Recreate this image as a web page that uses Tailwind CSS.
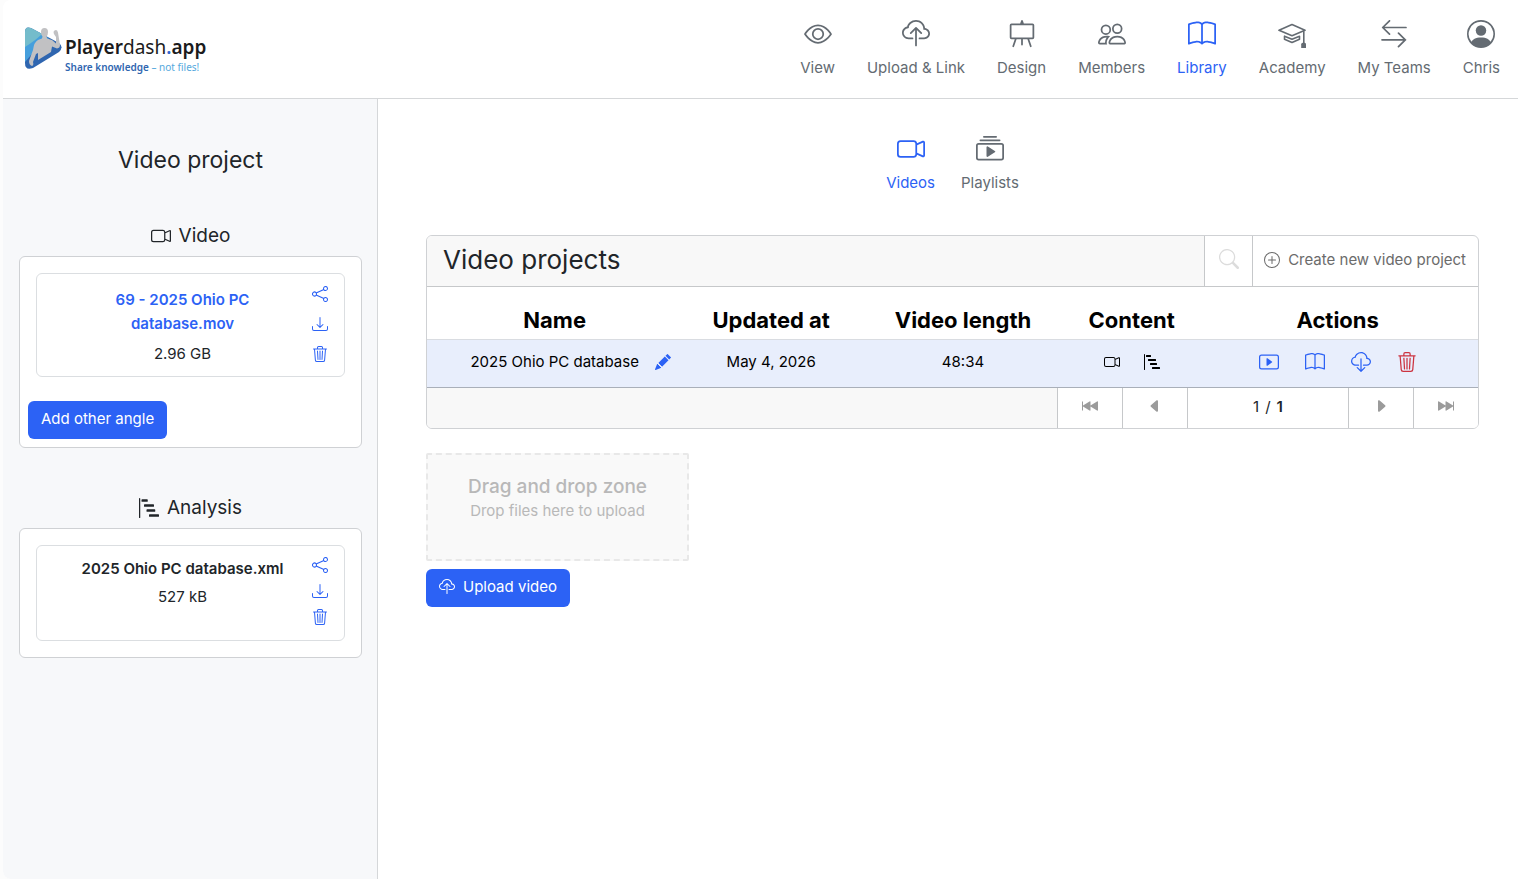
<!DOCTYPE html>
<html lang="en">
<head>
  <meta charset="UTF-8" />
  <meta name="viewport" content="width=device-width, initial-scale=1.0"/>
  <title>Playerdash.app | Library</title>
  <script src="https://cdn.jsdelivr.net/npm/@tailwindcss/browser@4"></script>
</head>
<body class="bg-[#fcfcfc] text-[#212529] font-['Inter',sans-serif] text-[15px] leading-6 pl-[3px]">

<!-- ICONS -->
<svg class="hidden" aria-hidden="true">
  <symbol id="eye" viewBox="0 0 16 16">
    <path d="M16 8s-3-5.5-8-5.5S0 8 0 8s3 5.5 8 5.5S16 8 16 8M1.173 8a13 13 0 0 1 1.66-2.043C4.12 4.668 5.88 3.5 8 3.5s3.879 1.168 5.168 2.457A13 13 0 0 1 14.828 8q-.086.13-.195.288c-.335.48-.83 1.12-1.465 1.755C11.879 11.332 10.119 12.5 8 12.5s-3.879-1.168-5.168-2.457A13 13 0 0 1 1.172 8z"/>
    <path d="M8 5.5a2.5 2.5 0 1 0 0 5 2.5 2.5 0 0 0 0-5M4.5 8a3.5 3.5 0 1 1 7 0 3.5 3.5 0 0 1-7 0"/>
  </symbol>
  <symbol id="cloud-upload" viewBox="0 0 16 16">
    <path d="M4.406 1.342A5.53 5.53 0 0 1 8 0c2.69 0 4.923 2 5.166 4.579C14.758 4.804 16 6.137 16 7.773 16 9.569 14.502 11 12.687 11H10a.5.5 0 0 1 0-1h2.688C13.979 10 15 8.988 15 7.773c0-1.216-1.02-2.228-2.313-2.228h-.5v-.5C12.188 2.825 10.328 1 8 1a4.53 4.53 0 0 0-2.941 1.1c-.757.652-1.153 1.438-1.153 2.055v.448l-.445.049C2.064 4.805 1 5.952 1 7.318 1 8.785 2.23 10 3.781 10H6a.5.5 0 0 1 0 1H3.781C1.708 11 0 9.366 0 7.318c0-1.763 1.266-3.223 2.942-3.593.143-.863.698-1.723 1.464-2.383"/>
    <path d="M7.646 4.146a.5.5 0 0 1 .708 0l3 3a.5.5 0 0 1-.708.708L8.5 5.707V14.5a.5.5 0 0 1-1 0V5.707L5.354 7.854a.5.5 0 1 1-.708-.708z"/>
  </symbol>
  <symbol id="cloud-download" viewBox="0 0 16 16">
    <path d="M4.406 1.342A5.53 5.53 0 0 1 8 0c2.69 0 4.923 2 5.166 4.579C14.758 4.804 16 6.137 16 7.773 16 9.569 14.502 11 12.687 11H10a.5.5 0 0 1 0-1h2.688C13.979 10 15 8.988 15 7.773c0-1.216-1.02-2.228-2.313-2.228h-.5v-.5C12.188 2.825 10.328 1 8 1a4.53 4.53 0 0 0-2.941 1.1c-.757.652-1.153 1.438-1.153 2.055v.448l-.445.049C2.064 4.805 1 5.952 1 7.318 1 8.785 2.23 10 3.781 10H6a.5.5 0 0 1 0 1H3.781C1.708 11 0 9.366 0 7.318c0-1.763 1.266-3.223 2.942-3.593.143-.863.698-1.723 1.464-2.383"/>
    <path d="M7.646 15.854a.5.5 0 0 0 .708 0l3-3a.5.5 0 0 0-.708-.708L8.5 14.293V5.5a.5.5 0 0 0-1 0v8.793l-2.146-2.147a.5.5 0 0 0-.708.708z"/>
  </symbol>
  <symbol id="easel" viewBox="0 0 16 16">
    <path d="M8 0a.5.5 0 0 1 .473.337L9.046 2H14a1 1 0 0 1 1 1v7a1 1 0 0 1-1 1h-1.85l1.323 3.837a.5.5 0 1 1-.946.326L11.092 11H8.5v3a.5.5 0 0 1-1 0v-3H4.908l-1.435 4.163a.5.5 0 1 1-.946-.326L3.85 11H2a1 1 0 0 1-1-1V3a1 1 0 0 1 1-1h4.954L7.527.337A.5.5 0 0 1 8 0M2 3v7h12V3z"/>
  </symbol>
  <symbol id="people" viewBox="0 0 16 16">
    <path d="M15 14s1 0 1-1-1-4-5-4-5 3-5 4 1 1 1 1zm-7.978-1L7 12.996c.001-.264.167-1.03.76-1.72C8.312 10.629 9.282 10 11 10c1.717 0 2.687.63 3.24 1.276.593.69.758 1.457.76 1.72l-.008.002-.014.002zM11 7a2 2 0 1 0 0-4 2 2 0 0 0 0 4m3-2a3 3 0 1 1-6 0 3 3 0 0 1 6 0M6.936 9.28a6 6 0 0 0-1.23-.247A7 7 0 0 0 5 9c-4 0-5 3-5 4q0 1 1 1h4.216A2.24 2.24 0 0 1 5 13c0-1.01.377-2.042 1.09-2.904.243-.294.526-.569.846-.816M4.92 10A5.5 5.5 0 0 0 4 13H1c0-.26.164-1.03.76-1.724.545-.636 1.492-1.256 3.16-1.275ZM1.5 5.5a3 3 0 1 1 6 0 3 3 0 0 1-6 0m3-2a2 2 0 1 0 0 4 2 2 0 0 0 0-4"/>
  </symbol>
  <symbol id="book" viewBox="0 0 16 16">
    <path d="M1 2.828c.885-.37 2.154-.769 3.388-.893 1.33-.134 2.458.063 3.112.752v9.746c-.935-.53-2.12-.603-3.213-.493-1.18.12-2.37.461-3.287.811zm7.5-.141c.654-.689 1.782-.886 3.112-.752 1.234.124 2.503.523 3.388.893v9.923c-.918-.35-2.107-.692-3.287-.81-1.094-.111-2.278-.039-3.213.492zM8 1.783C7.015.936 5.587.81 4.287.94c-1.514.153-3.042.672-3.994 1.105A.5.5 0 0 0 0 2.5v11a.5.5 0 0 0 .707.455c.882-.4 2.303-.881 3.68-1.02 1.409-.142 2.59.087 3.223.877a.5.5 0 0 0 .78 0c.633-.79 1.814-1.019 3.222-.877 1.378.139 2.8.62 3.681 1.02A.5.5 0 0 0 16 13.5v-11a.5.5 0 0 0-.293-.455c-.952-.433-2.48-.952-3.994-1.105C10.413.809 8.985.936 8 1.783"/>
  </symbol>
  <symbol id="mortarboard" viewBox="0 0 28 28">
    <path d="M14 4.500 27 10.300 14 15.800 1 10.300ZM6.500 16.200v3l7.500 3.300 7.500-3.300v-3L14 19.300ZM25.800 11v12" fill="none" stroke="currentColor" stroke-width="1.600" stroke-linejoin="round"/>
    <path d="M23.200 24.200q0-1.500 1.500-1.500h2q1.300 0 1.300 1.500V28h-4.800z"/>
  </symbol>
  <symbol id="arrows" viewBox="0 0 28 28">
    <path d="M26 7.500H3M9.500 .8 2.700 7.500l6.800 6.700M2 19.800h23.500M18.500 13.200l6.800 6.600-6.800 6.900" fill="none" stroke="currentColor" stroke-width="1.700" stroke-linecap="round" stroke-linejoin="round"/>
  </symbol>
  <symbol id="person-circle" viewBox="0 0 16 16">
    <path d="M11 6a3 3 0 1 1-6 0 3 3 0 0 1 6 0"/>
    <path fill-rule="evenodd" d="M0 8a8 8 0 1 1 16 0A8 8 0 0 1 0 8m8-7a7 7 0 0 0-5.468 11.370C3.242 11.226 4.805 10 8 10s4.757 1.225 5.468 2.370A7 7 0 0 0 8 1"/>
  </symbol>
  <symbol id="camera" viewBox="0 0 16 16">
    <path fill-rule="evenodd" d="M0 5a2 2 0 0 1 2-2h7.500a2 2 0 0 1 1.983 1.738l3.110-1.382A1 1 0 0 1 16 4.269v7.462a1 1 0 0 1-1.406.913l-3.111-1.382A2 2 0 0 1 9.500 13H2a2 2 0 0 1-2-2zm11.500 5.175 3.500 1.556V4.269l-3.500 1.556zM2 4a1 1 0 0 0-1 1v6a1 1 0 0 0 1 1h7.500a1 1 0 0 0 1-1V5a1 1 0 0 0-1-1z"/>
  </symbol>
  <symbol id="collection-play" viewBox="0 0 16 16">
    <path d="M2 3a.5.5 0 0 0 .5.5h11a.5.5 0 0 0 0-1h-11A.5.5 0 0 0 2 3m2-2a.5.5 0 0 0 .5.5h7a.5.5 0 0 0 0-1h-7A.5.5 0 0 0 4 1m2.765 5.576A.5.5 0 0 0 6 7v5a.5.5 0 0 0 .765.424l4-2.500a.5.5 0 0 0 0-.848z"/>
    <path d="M1.500 14.500A1.500 1.500 0 0 1 0 13V6a1.500 1.500 0 0 1 1.500-1.500h13A1.500 1.500 0 0 1 16 6v7a1.500 1.500 0 0 1-1.500 1.500zm13-1a.5.5 0 0 0 .5-.5V6a.5.5 0 0 0-.5-.5h-13A.5.5 0 0 0 1 6v7a.5.5 0 0 0 .5.5z"/>
  </symbol>
  <symbol id="steps" viewBox="0 0 16 16">
    <path d="M.5 0a.5.5 0 0 1 .5.5v15a.5.5 0 0 1-1 0V.5A.5.5 0 0 1 .5 0M2 1.500a.5.5 0 0 1 .5-.5h4a.5.5 0 0 1 .5.5v1a.5.5 0 0 1-.5.5h-4a.5.5 0 0 1-.5-.5zm2 4a.5.5 0 0 1 .5-.5h7a.5.5 0 0 1 .5.5v1a.5.5 0 0 1-.5.5h-7a.5.5 0 0 1-.5-.5zm2 4a.5.5 0 0 1 .5-.5h6a.5.5 0 0 1 .5.5v1a.5.5 0 0 1-.5.5h-6a.5.5 0 0 1-.5-.5zm2 4a.5.5 0 0 1 .5-.5h7a.5.5 0 0 1 .5.5v1a.5.5 0 0 1-.5.5h-7a.5.5 0 0 1-.5-.5z"/>
  </symbol>
  <symbol id="share" viewBox="0 0 16 16">
    <path d="M13.500 1a1.500 1.500 0 1 0 0 3 1.500 1.500 0 0 0 0-3M11 2.500a2.500 2.500 0 1 1 .603 1.628l-6.718 3.120a2.500 2.500 0 0 1 0 1.504l6.718 3.120a2.500 2.500 0 1 1-.488.876l-6.718-3.120a2.500 2.500 0 1 1 0-3.256l6.718-3.120A2.500 2.500 0 0 1 11 2.500m-8.500 4a1.500 1.500 0 1 0 0 3 1.500 1.500 0 0 0 0-3m11 5.500a1.500 1.500 0 1 0 0 3 1.500 1.500 0 0 0 0-3"/>
  </symbol>
  <symbol id="download" viewBox="0 0 16 16">
    <path d="M.5 9.900a.5.5 0 0 1 .5.5v2.500a1 1 0 0 0 1 1h12a1 1 0 0 0 1-1v-2.500a.5.5 0 0 1 1 0v2.500a2 2 0 0 1-2 2H2a2 2 0 0 1-2-2v-2.500a.5.5 0 0 1 .5-.5"/>
    <path d="M7.646 11.854a.5.5 0 0 0 .708 0l3-3a.5.5 0 0 0-.708-.708L8.500 10.293V1.500a.5.5 0 0 0-1 0v8.793L5.354 8.146a.5.5 0 1 0-.708.708z"/>
  </symbol>
  <symbol id="trash" viewBox="0 0 16 16">
    <path d="M6.500 1h3a.5.5 0 0 1 .5.5v1H6v-1a.5.5 0 0 1 .5-.5M11 2.500v-1A1.500 1.500 0 0 0 9.500 0h-3A1.500 1.500 0 0 0 5 1.500v1H1.500a.5.5 0 0 0 0 1h.538l.853 10.660A2 2 0 0 0 4.885 16h6.230a2 2 0 0 0 1.994-1.840l.853-10.660h.538a.5.5 0 0 0 0-1zm1.958 1-.846 10.580a1 1 0 0 1-.997.920h-6.230a1 1 0 0 1-.997-.920L3.042 3.500zm-7.487 1a.5.5 0 0 1 .528.470l.5 8.500a.5.5 0 0 1-.998.060L5 5.030a.5.5 0 0 1 .470-.530m5.058 0a.5.5 0 0 1 .470.530l-.5 8.500a.5.5 0 1 1-.998-.060l.5-8.500a.5.5 0 0 1 .528-.470M8 4.500a.5.5 0 0 1 .5.5v8.500a.5.5 0 0 1-1 0V5a.5.5 0 0 1 .5-.5"/>
  </symbol>
  <symbol id="pencil" viewBox="0 0 16 16">
    <path d="M12.854.146a.5.5 0 0 0-.707 0L10.500 1.793 14.207 5.500l1.647-1.646a.5.5 0 0 0 0-.708zm.646 6.061L9.793 2.500 3.293 9H3.500a.5.5 0 0 1 .5.5v.5h.5a.5.5 0 0 1 .5.5v.5h.5a.5.5 0 0 1 .5.5v.5h.5a.5.5 0 0 1 .5.5v.207zm-7.468 7.468A.5.5 0 0 1 6 13.500V13h-.5a.5.5 0 0 1-.5-.5V12h-.5a.5.5 0 0 1-.5-.5V11h-.5a.5.5 0 0 1-.5-.5V10h-.5a.5.5 0 0 1-.175-.032l-.179.178a.5.5 0 0 0-.110.168l-2 5a.5.5 0 0 0 .650.650l5-2a.5.5 0 0 0 .168-.110z"/>
  </symbol>
  <symbol id="play-btn" viewBox="0 0 16 16">
    <path d="M6.790 5.093A.5.5 0 0 0 6 5.500v5a.5.5 0 0 0 .790.407l3.500-2.500a.5.5 0 0 0 0-.814z"/>
    <path d="M0 4a2 2 0 0 1 2-2h12a2 2 0 0 1 2 2v8a2 2 0 0 1-2 2H2a2 2 0 0 1-2-2zm15 0a1 1 0 0 0-1-1H2a1 1 0 0 0-1 1v8a1 1 0 0 0 1 1h12a1 1 0 0 0 1-1z"/>
  </symbol>
  <symbol id="search" viewBox="0 0 16 16">
    <path d="M11.742 10.344a6.500 6.500 0 1 0-1.397 1.398h-.001q.044.060.098.115l3.850 3.850a1 1 0 0 0 1.415-1.414l-3.850-3.850a1 1 0 0 0-.115-.100zM12 6.500a5.500 5.500 0 1 1-11 0 5.500 5.500 0 0 1 11 0"/>
  </symbol>
  <symbol id="plus-circle" viewBox="0 0 16 16">
    <path d="M8 15A7 7 0 1 1 8 1a7 7 0 0 1 0 14m0 1A8 8 0 1 0 8 0a8 8 0 0 0 0 16"/>
    <path d="M8 4a.5.5 0 0 1 .5.5v3h3a.5.5 0 0 1 0 1h-3v3a.5.5 0 0 1-1 0v-3h-3a.5.5 0 0 1 0-1h3v-3A.5.5 0 0 1 8 4"/>
  </symbol>
  <symbol id="last" viewBox="0 0 16 16">
    <path d="M0 4q0-1 1-.5l6.500 4V4q0-1 1-.5L15 7.500V3.500h1v9h-1v-4l-6.500 4q-1 .5-1-.5V8.500l-6.500 4q-1 .5-1-.5z"/>
  </symbol>
  <symbol id="next" viewBox="0 0 16 16">
    <path d="m12.140 8.753-5.482 4.796c-.646.566-1.658.106-1.658-.753V3.204a1 1 0 0 1 1.659-.753l5.480 4.796a1 1 0 0 1 0 1.506z"/>
  </symbol>
</svg>

<div class="min-h-screen bg-white flex flex-col rounded-l-lg overflow-hidden">

  <!-- HEADER -->
  <header class="flex items-center justify-between h-[99px] border-b border-[#d5d7d9] pl-[22px] pr-0.5">
    <a href="#" class="flex items-center">
      <svg class="w-[38px] h-[44px] shrink-0" viewBox="0 0 38 44">
        <defs>
          <clipPath id="mark"><path d="M0 5Q0-1 6 1L34 16Q39 20 34 25L8 41Q0 44 0 36Z"/></clipPath>
        </defs>
        <g clip-path="url(#mark)">
          <path fill="#2f66b0" d="M0 0h38v44H0z"/>
          <path fill="#469fdc" d="M0 18 16 4l8 8L6 28l-6 7z"/>
          <path fill="#74bccb" d="M0 0h14l3 7Q11 13 0 20z"/>
        </g>
        <path fill="#c1c1c3" d="M16 5Q16 1 19.500 1T23 5Q23 8 21.500 9.500L22 11.500 27 13 31 16.500 31 10Q27 5 29.500 3.500 32 2 33 5.500L35 18Q35 21 32 21.500L27 19.500 26 25 13 33 13 26 11 27 8 35Q9 38 7 39 4 38 4 34L8 23Q9 15 13 13L17 11.500 17.500 9.500Q16 8 16 5Z"/>
      </svg>
      <span class="flex flex-col pl-0.5 pt-3">
        <span class="font-['Noto_Sans',sans-serif] text-[19px] leading-6 text-[#1b1b1c]"><b class="font-semibold">Player</b>dash<b class="font-semibold"><span class="text-[#2f66d0]">.</span>app</b></span>
        <span class="font-['Noto_Sans',sans-serif] text-[10px] leading-4 text-[#54a8dd]"><b class="font-semibold text-[#2f66b0]">Share knowledge</b> – not files!</span>
      </span>
    </a>
    <nav class="flex pt-0.5 text-[#646b72]">
      <a href="#" class="flex flex-col items-center gap-2 px-4"><svg class="size-7 fill-current"><use href="#eye"/></svg>View</a>
      <a href="#" class="flex flex-col items-center gap-2 px-4"><svg class="size-7 fill-current"><use href="#cloud-upload"/></svg>Upload &amp; Link</a>
      <a href="#" class="flex flex-col items-center gap-2 px-4"><svg class="size-7 fill-current"><use href="#easel"/></svg>Design</a>
      <a href="#" class="flex flex-col items-center gap-2 px-4"><svg class="size-7 fill-current"><use href="#people"/></svg>Members</a>
      <a href="#" class="flex flex-col items-center gap-2 px-4 text-[#2c62f5]"><svg class="size-7 fill-current"><use href="#book"/></svg>Library</a>
      <a href="#" class="flex flex-col items-center gap-2 px-4"><svg class="size-7 fill-current"><use href="#mortarboard"/></svg>Academy</a>
      <a href="#" class="flex flex-col items-center gap-2 px-4"><svg class="size-7 fill-current"><use href="#arrows"/></svg>My Teams</a>
      <a href="#" class="flex flex-col items-center gap-2 px-4"><svg class="size-7 fill-current"><use href="#person-circle"/></svg>Chris</a>
    </nav>
  </header>

  <div class="flex flex-1">

    <!-- SIDEBAR -->
    <aside class="w-[375px] shrink-0 bg-[#f7f8fa] border-r border-[#d5d7d9] pl-4 pr-[15px] pt-[45px]">
      <h1 class="text-center text-[23px] leading-8">Video project</h1>

      <h2 class="mt-[46px] flex items-center justify-center gap-2 text-[19px] leading-7">
        <svg class="size-5 fill-current"><use href="#camera"/></svg>Video
      </h2>
      <section class="mt-1.5 bg-white border border-[#cfd1d4] rounded-md pt-4 px-2 pb-2">
        <div class="mx-2 flex border border-[#dbdee1] rounded-md pt-3 pb-2.5 px-4">
          <div class="flex-1 text-center px-10">
            <a href="#" class="block pt-0.5 font-semibold text-[#2c62f5]">69 - 2025 Ohio PC database.mov</a>
            <p class="mt-1.5">2.96 GB</p>
          </div>
          <div class="flex flex-col gap-3.5 text-[#2c62f5]">
            <button type="button" aria-label="Share video" class="size-4"><svg class="size-4 fill-current"><use href="#share"/></svg></button>
            <button type="button" aria-label="Download video" class="size-4"><svg class="size-4 fill-current"><use href="#download"/></svg></button>
            <button type="button" aria-label="Delete video" class="size-4"><svg class="size-4 fill-current"><use href="#trash"/></svg></button>
          </div>
        </div>
        <button type="button" class="mt-6 h-[38px] px-[13px] pb-0.5 rounded-md bg-[#2c62f5] text-white">Add other angle</button>
      </section>

      <h2 class="mt-[46px] flex items-center justify-center gap-2 text-[19px] leading-7">
        <svg class="size-5 fill-current"><use href="#steps"/></svg>Analysis
      </h2>
      <section class="mt-1.5 bg-white border border-[#cfd1d4] rounded-md p-4">
        <div class="flex border border-[#dbdee1] rounded-md h-24 pt-[11px] px-4">
          <div class="flex-1 text-center">
            <p class="font-semibold">2025 Ohio PC database.xml</p>
            <p class="mt-1">527 kB</p>
          </div>
          <div class="flex flex-col gap-2.5 text-[#2c62f5]">
            <button type="button" aria-label="Share analysis" class="size-4"><svg class="size-4 fill-current"><use href="#share"/></svg></button>
            <button type="button" aria-label="Download analysis" class="size-4"><svg class="size-4 fill-current"><use href="#download"/></svg></button>
            <button type="button" aria-label="Delete analysis" class="size-4"><svg class="size-4 fill-current"><use href="#trash"/></svg></button>
          </div>
        </div>
      </section>
    </aside>

    <!-- MAIN -->
    <main class="flex-1 pl-12 pr-[39px] pt-9">
      <nav class="flex justify-center gap-[26px] text-[#646b72]">
        <a href="#" class="flex flex-col items-center gap-2 text-[#2c62f5]"><svg class="size-7 fill-current"><use href="#camera"/></svg>Videos</a>
        <a href="#" class="flex flex-col items-center gap-2"><svg class="size-7 fill-current"><use href="#collection-play"/></svg>Playlists</a>
      </nav>

      <section class="mt-10 border border-[#cfd1d4] rounded-md overflow-hidden">
        <div class="flex h-[51px] border-b border-[#c6c8ca]">
          <h2 class="flex-1 bg-[#f8f8f8] pl-4 text-[26px] leading-[48px]">Video projects</h2>
          <button type="button" aria-label="Search" class="w-12 flex items-center justify-center border-l border-[#c6c8ca] text-[#dcdcdc] pb-1"><svg class="size-5 fill-current"><use href="#search"/></svg></button>
          <button type="button" class="flex items-center gap-2 pl-[11px] pr-3 pb-0.5 border-l border-[#c6c8ca] text-[#6b6b6b]"><svg class="size-4 fill-current"><use href="#plus-circle"/></svg>Create new video project</button>
        </div>

        <table class="w-full table-fixed text-center text-black">
          <thead>
            <tr class="h-[52px] text-[22px] leading-8 border-b border-[#d9dce1]">
              <th class="w-[24.3%] pt-3.5 font-bold">Name</th>
              <th class="w-[16.9%] pt-3.5 font-bold">Updated at</th>
              <th class="w-[19.6%] pt-3.5 font-bold">Video length</th>
              <th class="w-[12.5%] pt-3.5 font-bold">Content</th>
              <th class="w-[26.7%] pt-3.5 font-bold">Actions</th>
            </tr>
          </thead>
          <tbody>
            <tr class="h-12 bg-[#e8eefc] border-b border-[#a9afb9]">
              <td class="pb-[3px] pl-8">
                <span class="flex items-center justify-center gap-4">2025 Ohio PC database
                  <button type="button" aria-label="Rename" class="text-[#2c62f5]"><svg class="size-4 fill-current"><use href="#pencil"/></svg></button>
                </span>
              </td>
              <td class="pb-[3px]">May 4, 2026</td>
              <td class="pb-[3px]">48:34</td>
              <td class="pb-[3px]">
                <span class="flex items-center justify-center gap-6">
                  <svg class="size-4 fill-current"><use href="#camera"/></svg>
                  <svg class="size-4 fill-current"><use href="#steps"/></svg>
                </span>
              </td>
              <td class="pb-[3px]">
                <span class="flex items-center justify-center gap-[26px] text-[#2c62f5]">
                  <button type="button" aria-label="Play"><svg class="size-5 fill-current"><use href="#play-btn"/></svg></button>
                  <button type="button" aria-label="Open library"><svg class="size-5 fill-current"><use href="#book"/></svg></button>
                  <button type="button" aria-label="Download"><svg class="size-5 fill-current"><use href="#cloud-download"/></svg></button>
                  <button type="button" aria-label="Delete" class="text-[#cc3340]"><svg class="size-5 fill-current"><use href="#trash"/></svg></button>
                </span>
              </td>
            </tr>
          </tbody>
        </table>

        <!-- Pagination -->
        <div class="flex justify-end h-10 bg-[#f8f8f8] text-[#9b9b9b]">
          <button type="button" aria-label="First page" class="w-[65px] flex items-center justify-center bg-white border-l border-[#c6c8ca] pb-1"><svg class="size-4 fill-current rotate-180"><use href="#last"/></svg></button>
          <button type="button" aria-label="Previous page" class="w-[65px] flex items-center justify-center bg-white border-l border-[#c6c8ca] pb-1"><svg class="size-4 fill-current rotate-180"><use href="#next"/></svg></button>
          <span class="w-[161px] flex items-center justify-center gap-1.5 bg-white border-l border-[#c6c8ca] pb-0.5 text-[#212529]"><span>1</span><span>/</span><b class="font-semibold">1</b></span>
          <button type="button" aria-label="Next page" class="w-[65px] flex items-center justify-center bg-white border-l border-[#c6c8ca] pb-1"><svg class="size-4 fill-current"><use href="#next"/></svg></button>
          <button type="button" aria-label="Last page" class="w-[65px] flex items-center justify-center bg-white border-l border-[#c6c8ca] pb-1"><svg class="size-4 fill-current"><use href="#last"/></svg></button>
        </div>
      </section>

      <!-- Upload -->
      <div class="mt-6 w-[263px] h-[108px] border-2 border-dashed border-[#e8e8e8] bg-[#f9f9f9] rounded-xs pt-5 text-center text-[#b8b8b8]">
        <p class="text-[19px] leading-6 font-medium">Drag and drop zone</p>
        <p>Drop files here to upload</p>
      </div>
      <button type="button" class="mt-2 flex items-center gap-2 h-[38px] px-[13px] pb-0.5 rounded-md bg-[#2c62f5] text-white"><svg class="size-4 fill-current"><use href="#cloud-upload"/></svg>Upload video</button>
    </main>
  </div>
</div>

</body>
</html>
